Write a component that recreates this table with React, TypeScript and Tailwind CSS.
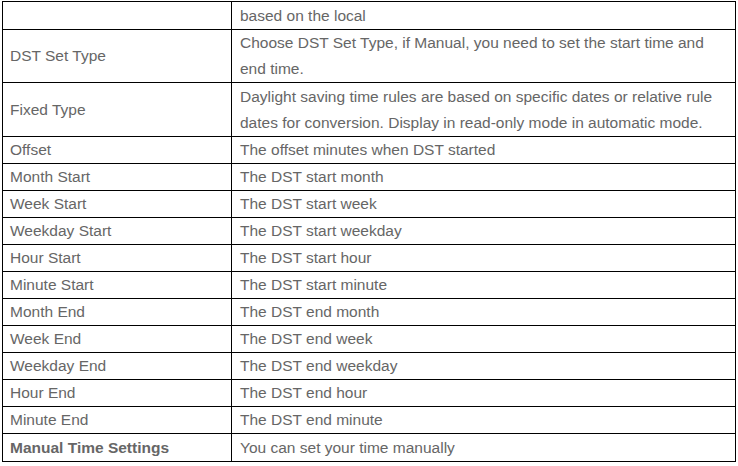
import React from "react";

type Row = {
  name: string;
  desc: string[];
  bold?: boolean;
  h: string;
};

const rows: Row[] = [
  { name: "", desc: ["based on the local"], h: "h-[28px]" },
  {
    name: "DST Set Type",
    desc: [
      "Choose DST Set Type, if Manual, you need to set the start time and",
      "end time.",
    ],
    h: "h-[53px]",
  },
  {
    name: "Fixed Type",
    desc: [
      "Daylight saving time rules are based on specific dates or relative rule",
      "dates for conversion. Display in read-only mode in automatic mode.",
    ],
    h: "h-[54px]",
  },
  { name: "Offset", desc: ["The offset minutes when DST started"], h: "h-[27px]" },
  { name: "Month Start", desc: ["The DST start month"], h: "h-[27px]" },
  { name: "Week Start", desc: ["The DST start week"], h: "h-[27px]" },
  { name: "Weekday Start", desc: ["The DST start weekday"], h: "h-[27px]" },
  { name: "Hour Start", desc: ["The DST start hour"], h: "h-[27px]" },
  { name: "Minute Start", desc: ["The DST start minute"], h: "h-[27px]" },
  { name: "Month End", desc: ["The DST end month"], h: "h-[27px]" },
  { name: "Week End", desc: ["The DST end week"], h: "h-[27px]" },
  { name: "Weekday End", desc: ["The DST end weekday"], h: "h-[27px]" },
  { name: "Hour End", desc: ["The DST end hour"], h: "h-[27px]" },
  { name: "Minute End", desc: ["The DST end minute"], h: "h-[27px]" },
  {
    name: "Manual Time Settings",
    desc: ["You can set your time manually"],
    bold: true,
    h: "h-[27px]",
  },
];

export default function App() {
  return (
    <div className="h-[466px] w-[738px] bg-white pl-[2px] pt-[1px] font-['Liberation_Sans',Arial,sans-serif] text-[15.5px] text-[#666666]">
      <div className="w-[734px] border border-black">
        {rows.map((row, i) => (
          <div
            key={i}
            className={`grid grid-cols-[229px_1fr] ${row.h} ${
              i < rows.length - 1 ? "border-b border-black" : ""
            }`}
          >
            <div
              className={`flex items-center border-r border-black pl-[7px] ${
                row.bold ? "font-bold" : ""
              }`}
            >
              {row.name}
            </div>
            <div className="flex flex-col justify-center pl-[8px] leading-[26px]">
              {row.desc.map((line, j) => (
                <span key={j} className="whitespace-nowrap">
                  {line}
                </span>
              ))}
            </div>
          </div>
        ))}
      </div>
    </div>
  );
}
